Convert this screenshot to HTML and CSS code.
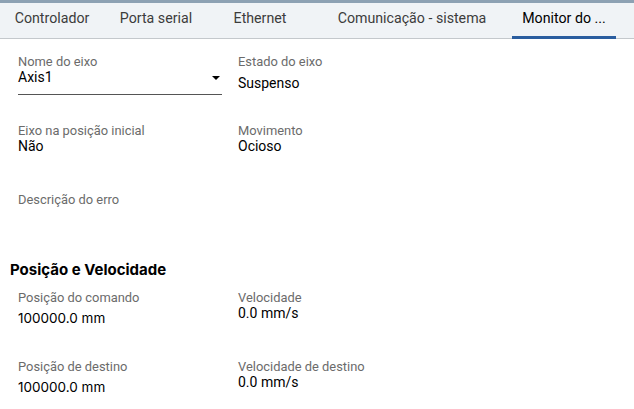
FILE: index.html
```html
<!DOCTYPE html>
<html lang="pt">
<head>
<meta charset="utf-8">
<link rel="stylesheet" href="styles.css">
</head>
<body>
<div class="topbar"></div>
<nav class="tabs">
  <div class="tab">Controlador</div>
  <div class="tab">Porta serial</div>
  <div class="tab">Ethernet</div>
  <div class="tab tab--wide">Comunicação - sistema</div>
  <div class="tab tab--active">Monitor do ...</div>
</nav>
<main class="content">
  <section class="grid">
    <div class="field">
      <div class="label">Nome do eixo</div>
      <div class="select">
        <span class="value">Axis1</span>
        <svg class="caret" width="8" height="4" viewBox="0 0 8 4"><path d="M0 0h8L4 4z" fill="#000"/></svg>
      </div>
    </div>
    <div class="field">
      <div class="label">Estado do eixo</div>
      <div class="value value--pad">Suspenso</div>
    </div>
    <div class="field">
      <div class="label">Eixo na posição inicial</div>
      <div class="value">Não</div>
    </div>
    <div class="field">
      <div class="label">Movimento</div>
      <div class="value">Ocioso</div>
    </div>
    <div class="field">
      <div class="label">Descrição do erro</div>
      <div class="value"></div>
    </div>
    <div class="field"></div>
  </section>
  <h2 class="heading">Posição e Velocidade</h2>
  <section class="grid grid--pv">
    <div class="field">
      <div class="label">Posição do comando</div>
      <div class="value value--num">100000.0 mm</div>
    </div>
    <div class="field">
      <div class="label">Velocidade</div>
      <div class="value">0.0 mm/s</div>
    </div>
    <div class="field">
      <div class="label">Posição de destino</div>
      <div class="value value--num">100000.0 mm</div>
    </div>
    <div class="field">
      <div class="label">Velocidade de destino</div>
      <div class="value">0.0 mm/s</div>
    </div>
  </section>
</main>
</body>
</html>
```
FILE: styles.css
```css
* { box-sizing: border-box; }
html, body {
  margin: 0;
  padding: 0;
  background: #fff;
  font-family: Roboto, "Liberation Sans", sans-serif;
  color: #000;
}
.topbar {
  height: 3px;
  background: #8da1b3;
}
.tabs {
  display: flex;
  height: 36px;
  background: #f0f3f6;
  border-bottom: 1px solid #c4c8cc;
}
.tab {
  width: 104px;
  text-align: center;
  font-size: 14.2px;
  line-height: 30px;
  color: #3c3c3c;
  white-space: nowrap;
  border-bottom: 3px solid transparent;
  margin-bottom: -1px;
}
.tab--wide { width: 200px; }
.tab--active {
  color: #000;
  border-bottom-color: #2a5d9f;
}
.content {
  padding: 16px 0 0 18px;
}
.grid {
  display: grid;
  grid-template-columns: 220px 220px;
  grid-auto-rows: 69px;
}
.field {
  display: flex;
  flex-direction: column;
}
.label {
  font-size: 12.9px;
  line-height: 14px;
  color: #6b6b6b;
}
.value {
  font-size: 14px;
  line-height: 16px;
  color: #000;
}
.value--pad { padding-top: 6px; }
.select {
  display: flex;
  justify-content: space-between;
  align-items: flex-start;
  width: 204px;
  height: 26px;
  border-bottom: 1px solid #555;
}
.caret { margin: 7px 2px 0 0; }
.heading {
  margin: -2px 0 0 -8px;
  font-family: Inter, Roboto, sans-serif;
  font-size: 15px;
  font-weight: 700;
  line-height: 20px;
  color: #000;
}
.grid--pv { margin-top: 11px; }
.value--num {
  font-family: Inter, Roboto, sans-serif;
  font-size: 13.5px;
  padding-top: 5px;
}
```
